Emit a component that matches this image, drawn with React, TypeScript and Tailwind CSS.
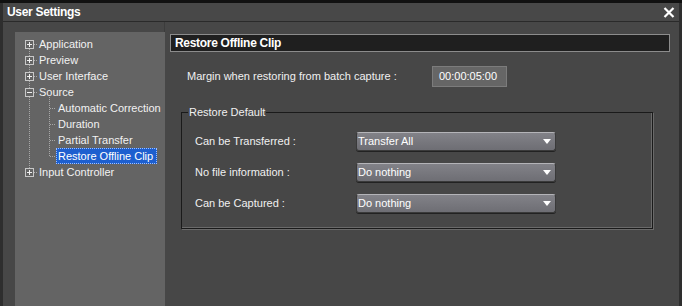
import React from 'react';

const FONT = { fontFamily: '"Liberation Sans", Arial, sans-serif' };

type TreeItem = { label: string; level: 0 | 1; expander?: '+' | '-'; selected?: boolean };

const TREE: TreeItem[] = [
  { label: 'Application', level: 0, expander: '+' },
  { label: 'Preview', level: 0, expander: '+' },
  { label: 'User Interface', level: 0, expander: '+' },
  { label: 'Source', level: 0, expander: '-' },
  { label: 'Automatic Correction', level: 1 },
  { label: 'Duration', level: 1 },
  { label: 'Partial Transfer', level: 1 },
  { label: 'Restore Offline Clip', level: 1, selected: true },
  { label: 'Input Controller', level: 0, expander: '+' },
];

function Expander({ sign }: { sign: '+' | '-' }) {
  return (
    <svg width="9" height="9" viewBox="0 0 9 9" className="shrink-0">
      <rect x="0.5" y="0.5" width="8" height="8" fill="#646464" stroke="#c8c8c8" />
      <path d="M2 4.5h5" stroke="#f0f0f0" />
      {sign === '+' && <path d="M4.5 2v5" stroke="#f0f0f0" />}
    </svg>
  );
}

function TreeLines() {
  // dotted connectors, rows are 16px tall starting at y=4
  const dot = { stroke: '#a8a8a8', strokeDasharray: '1 1' };
  return (
    <svg className="pointer-events-none absolute left-0 top-0" width="150" height="160">
      <path d="M14.5 17V140" {...dot} />
      <path d="M34.5 65V124" {...dot} />
      {[12, 28, 44, 60, 140].map((y) => (
        <path key={y} d={`M19 ${y + 0.5}H23`} {...dot} />
      ))}
      {[76, 92, 108, 124].map((y) => (
        <path key={y} d={`M35 ${y + 0.5}H41`} {...dot} />
      ))}
    </svg>
  );
}

function Tree() {
  return (
    <div className="relative ml-[12px] mt-[10px] w-[150px] shrink-0 self-stretch bg-[#646464] pt-[4px] text-[11px] text-[#f2f2f2]">
      <TreeLines />
      {TREE.map((item) => (
        <div
          key={item.label}
          className={`relative flex h-[16px] items-center ${item.level === 0 ? 'pl-[10px]' : 'pl-[41px]'}`}
        >
          {item.expander && <Expander sign={item.expander} />}
          <span
            className={
              item.selected
                ? 'border border-dotted border-[#9fc0ff] bg-[#1d5fcf] px-[1px] pr-[3px] leading-[14px] text-white'
                : item.level === 0
                  ? 'ml-[5px] leading-[14px]'
                  : 'ml-[2px] leading-[14px]'
            }
          >
            {item.label}
          </span>
        </div>
      ))}
    </div>
  );
}

function Select({ value }: { value: string }) {
  return (
    <div className="flex h-[19px] w-[200px] items-center justify-between rounded-[3px] border border-[#3a3a3a] border-t-[#b4b4b8] bg-gradient-to-b from-[#828288] to-[#6e6e74] pl-[1px] pr-[4px] text-[11px] text-white shadow-[0_1px_0_#222]">
      <span>{value}</span>
      <svg width="8" height="5" viewBox="0 0 8 5">
        <path d="M0 0H8L4 5Z" fill="#ffffff" />
      </svg>
    </div>
  );
}

function Row({ label, value }: { label: string; value: string }) {
  return (
    <div className="flex h-[19px] items-center">
      <span className="w-[161px] shrink-0">{label}</span>
      <Select value={value} />
    </div>
  );
}

export default function App() {
  return (
    <div
      className="flex h-[306px] w-[682px] flex-col overflow-hidden bg-[#474747] text-[11px] text-[#f0f0f0]"
      style={FONT}
    >
      <div className="h-[3px] shrink-0 bg-[#111]" />
      <div className="flex min-h-0 flex-1 flex-col border-x-[3px] border-[#2e2e2e]">
        <div className="flex h-[19px] shrink-0 items-center justify-between border-b border-[#2a2a2a] bg-[#484848] pl-[4px] pr-[4px]">
          <span className="text-[12px] font-bold tracking-[-0.3px] text-white">User Settings</span>
          <svg width="12" height="11" viewBox="0 0 12 11">
            <path d="M1.5 1L10.5 10M10.5 1L1.5 10" stroke="#ffffff" strokeWidth="2.2" />
          </svg>
        </div>

        <div className="flex min-h-0 flex-1">
          <div className="flex w-[162px] shrink-0 border-r border-[#3c3c3c]">
            <Tree />
          </div>

          <div className="flex flex-1 flex-col pl-[5px] pr-[9px] pt-[12px]">
            <div className="flex h-[18px] items-center border border-[#8c8c8c] bg-[#1f1f1f] pl-[4px] text-[12px] font-bold tracking-[-0.3px] text-white">
              Restore Offline Clip
            </div>

            <div className="mt-[14px] flex h-[21px] items-center pl-[17px]">
              <span className="w-[245px] shrink-0">Margin when restoring from batch capture :</span>
              <div className="flex h-[21px] w-[75px] items-center border border-[#7c7c7c] bg-[#666666] pl-[6px] text-white">
                00:00:05:00
              </div>
            </div>

            <div className="relative ml-[11px] mt-[25px] flex h-[117px] w-[472px] flex-col gap-[12px] border border-[#1a1a1a] pl-[13px] pt-[19px] shadow-[inset_-1px_-1px_0_#6a6a6a,1px_1px_0_#6a6a6a]">
              <span className="absolute -top-[8px] left-[6px] bg-[#474747] px-[1px] leading-[14px]">
                Restore Default
              </span>
              <Row label="Can be Transferred :" value="Transfer All" />
              <Row label="No file information :" value="Do nothing" />
              <Row label="Can be Captured :" value="Do nothing" />
            </div>
          </div>
        </div>
      </div>
    </div>
  );
}
